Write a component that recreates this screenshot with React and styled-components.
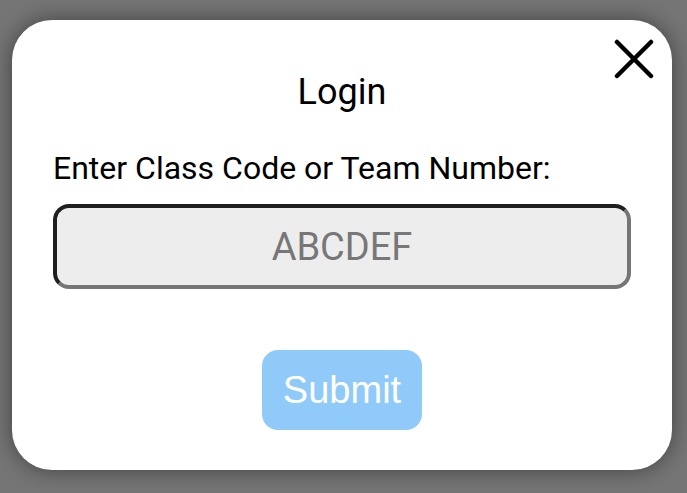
import React from "react";
import styled, { createGlobalStyle } from "styled-components";

const Global = createGlobalStyle`
  html, body { margin: 0; padding: 0; }
  body {
    width: 687px;
    height: 493px;
    background: #757575;
    font-family: Roboto, "Noto Sans", sans-serif;
    overflow: hidden;
  }
`;

const Page = styled.div`
  width: 687px;
  height: 493px;
  box-sizing: border-box;
  padding: 20px 15px 23px 12px;
  display: flex;
  align-items: flex-start;
`;

const Modal = styled.div`
  position: relative;
  width: 660px;
  height: 450px;
  box-sizing: border-box;
  background: #fff;
  border-radius: 40px;
  box-shadow: 0 0 22px rgba(0, 0, 0, 0.45);
  padding: 51px 41px 40px;
  display: flex;
  flex-direction: column;
`;

const CloseButton = styled.button`
  position: absolute;
  top: 19px;
  right: 18px;
  width: 40px;
  height: 40px;
  padding: 0;
  border: none;
  background: transparent;
  display: flex;
  align-items: center;
  justify-content: center;
  cursor: pointer;
`;

const Title = styled.h2`
  margin: 0;
  font-size: 36px;
  font-weight: 400;
  line-height: 42px;
  text-align: center;
  color: #000;
`;

const Label = styled.label`
  margin-top: 37px;
  font-size: 32px;
  line-height: 37px;
  color: #000;
`;

const CodeInput = styled.input`
  margin-top: 17px;
  width: 100%;
  height: 85px;
  box-sizing: border-box;
  border: 4px solid;
  border-color: #1f1f1f #767676 #767676 #1f1f1f;
  border-radius: 16px;
  background: #ededed;
  font-family: Roboto, "Noto Sans", sans-serif;
  font-size: 38px;
  text-align: center;
  color: #000;
  outline: none;
  &::placeholder { color: #777; }
`;

const SubmitButton = styled.button`
  margin: 61px auto 0;
  width: 160px;
  height: 80px;
  border: none;
  border-radius: 16px;
  background: #90caf9;
  color: #fff;
  font-family: "Liberation Sans", Arial, sans-serif;
  font-size: 38px;
  padding: 0;
  cursor: pointer;
`;

export default function App() {
  return (
    <>
      <Global />
      <Page>
        <Modal>
          <CloseButton aria-label="Close">
            <svg width="40" height="40" viewBox="0 0 40 40">
              <path d="M3 3 L37 37 M37 3 L3 37" stroke="#000" strokeWidth="4.5" strokeLinecap="round" fill="none" />
            </svg>
          </CloseButton>
          <Title>Login</Title>
          <Label htmlFor="code">Enter Class Code or Team Number:</Label>
          <CodeInput id="code" placeholder="ABCDEF" />
          <SubmitButton>Submit</SubmitButton>
        </Modal>
      </Page>
    </>
  );
}
